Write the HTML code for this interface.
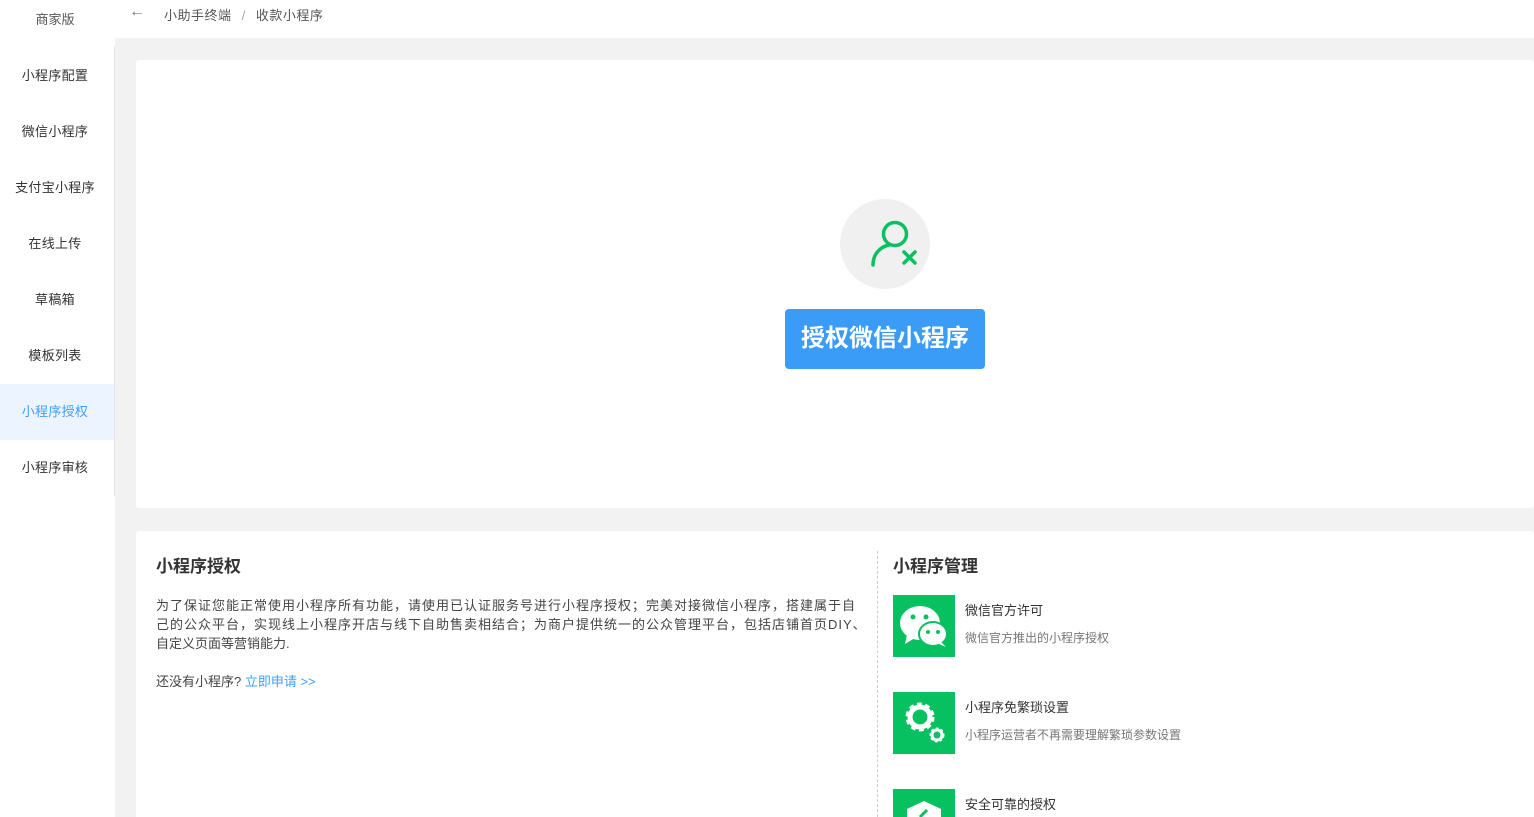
<!DOCTYPE html>
<html><head><meta charset="utf-8"><style>
*{margin:0;padding:0;box-sizing:border-box}
html,body{width:1534px;height:817px;overflow:hidden}
body{background:#fff;font-family:"Liberation Sans","Noto Sans CJK SC",sans-serif;color:#333;position:relative}
.side{position:absolute;left:0;top:0;width:115px;height:817px;background:#fff}
.side .brand{position:absolute;top:9px;left:0;width:110px;text-align:center;font-size:13px;color:#555}
.side .it{position:absolute;left:0;width:110px;height:56px;line-height:56px;text-align:center;font-size:13px;color:#333;letter-spacing:0.3px}
.side .act{width:114px;background:#ecf5ff;color:#409eff}
.sl{position:absolute;left:114px;top:46px;width:1px;height:450px;background:#e6e6e6}
.top{position:absolute;left:115px;top:0;right:0;height:38px;font-size:13px;color:#555;letter-spacing:0.5px}
.main{position:absolute;left:115px;top:38px;right:0;bottom:0;background:#f2f2f2}
.c1{position:absolute;left:136px;top:60px;width:1398px;height:448px;background:#fff;border-radius:3px}
.c2{position:absolute;left:136px;top:531px;width:1398px;height:300px;background:#fff;border-radius:3px}
.circ{position:absolute;left:840px;top:199px;width:90px;height:90px;border-radius:50%;background:#f0f0f0}
.btn{position:absolute;left:785px;top:309px;width:200px;height:60px;background:#3a9cf7;border-radius:4px;color:#fff;font-size:24px;line-height:60px;text-align:center;font-weight:bold}
.h{position:absolute;font-size:17px;font-weight:bold;color:#333}
.p{position:absolute;left:156px;top:596px;width:760px;font-size:13px;line-height:19px;color:#444;white-space:nowrap}
.ic{position:absolute;left:893px;width:62px;height:62px;background:#07c160;overflow:hidden}
.t1{position:absolute;left:965px;font-size:13px;color:#333}
.t2{position:absolute;left:965px;font-size:12px;color:#777}
</style></head><body>
<div class="side">
<div class="brand">商家版</div>
<div class="it" style="top:48px">小程序配置</div>
<div class="it" style="top:104px">微信小程序</div>
<div class="it" style="top:160px">支付宝小程序</div>
<div class="it" style="top:216px">在线上传</div>
<div class="it" style="top:272px">草稿箱</div>
<div class="it" style="top:328px">模板列表</div>
<div class="it act" style="top:384px;padding-right:4px">小程序授权</div>
<div class="it" style="top:440px">小程序审核</div>
</div>
<div class="main"></div>
<div class="sl"></div>
<div class="top"><span style="position:absolute;left:14px;top:3px;font-size:16px;color:#777">←</span><span style="position:absolute;left:49px;top:5px">小助手终端 <span style="color:#aaa;margin:0 6px">/</span> 收款小程序</span></div>
<div class="c1"></div>
<div class="circ"><svg width="90" height="90" viewBox="0 0 90 90"><g fill="none" stroke="#07c160" stroke-width="3.5" stroke-linecap="round"><circle cx="55" cy="35" r="11.5"/><path d="M33 66 C33 55 40 48 49 46"/><path d="M64 53 L75 64 M75 53 L64 64"/></g></svg></div>
<div class="btn">授权微信小程序</div>
<div class="c2"></div>
<div style="position:absolute;left:877px;top:551px;height:266px;border-left:1px dashed #ccc"></div>
<div class="h" style="left:156px;top:552px">小程序授权</div>
<div class="p"><span style="letter-spacing:1.0px">为了保证您能正常使用小程序所有功能，请使用已认证服务号进行小程序授权；完美对接微信小程序，搭建属于自</span><br><span style="letter-spacing:1.0px">己的公众平台，实现线上小程序开店与线下自助售卖相结合；为商户提供统一的公众管理平台，包括店铺首页DIY、</span><br>自定义页面等营销能力.<br><br>还没有小程序? <span style="color:#409eff">立即申请 &gt;&gt;</span></div>
<div class="h" style="left:893px;top:552px">小程序管理</div>
<div class="ic" style="top:595px"><svg width="62" height="62"><ellipse cx="27" cy="28" rx="20" ry="17" fill="#fff"/><path d="M14 40 L12 49 L22 43Z" fill="#fff"/><circle cx="20" cy="22" r="2.5" fill="#07c160"/><circle cx="33" cy="22" r="2.5" fill="#07c160"/><ellipse cx="40" cy="39" rx="15" ry="13" fill="#07c160"/><ellipse cx="40" cy="39" rx="13" ry="11" fill="#fff"/><path d="M48 47 L53 52 L46 49Z" fill="#fff"/><circle cx="35" cy="37" r="2" fill="#07c160"/><circle cx="45" cy="37" r="2" fill="#07c160"/></svg></div>
<div class="t1" style="top:600px">微信官方许可</div>
<div class="t2" style="top:629px">微信官方推出的小程序授权</div>
<div class="ic" style="top:692px"><svg width="62" height="62"><circle cx="27" cy="25" r="11" fill="none" stroke="#fff" stroke-width="7" stroke-dasharray="4 3"/><circle cx="27" cy="25" r="10" fill="none" stroke="#fff" stroke-width="5"/><circle cx="44" cy="43" r="5" fill="none" stroke="#fff" stroke-width="3"/><circle cx="44" cy="43" r="6" fill="none" stroke="#fff" stroke-width="3" stroke-dasharray="2.5 2"/></svg></div>
<div class="t1" style="top:697px">小程序免繁琐设置</div>
<div class="t2" style="top:726px">小程序运营者不再需要理解繁琐参数设置</div>
<div class="ic" style="top:789px"><svg width="62" height="62"><path d="M14 20 L31 12 L48 20 L48 40 L14 40Z" fill="#fff"/><path d="M27 28 L34 21" stroke="#07c160" stroke-width="3"/></svg></div>
<div class="t1" style="top:794px">安全可靠的授权</div>
</body></html>
